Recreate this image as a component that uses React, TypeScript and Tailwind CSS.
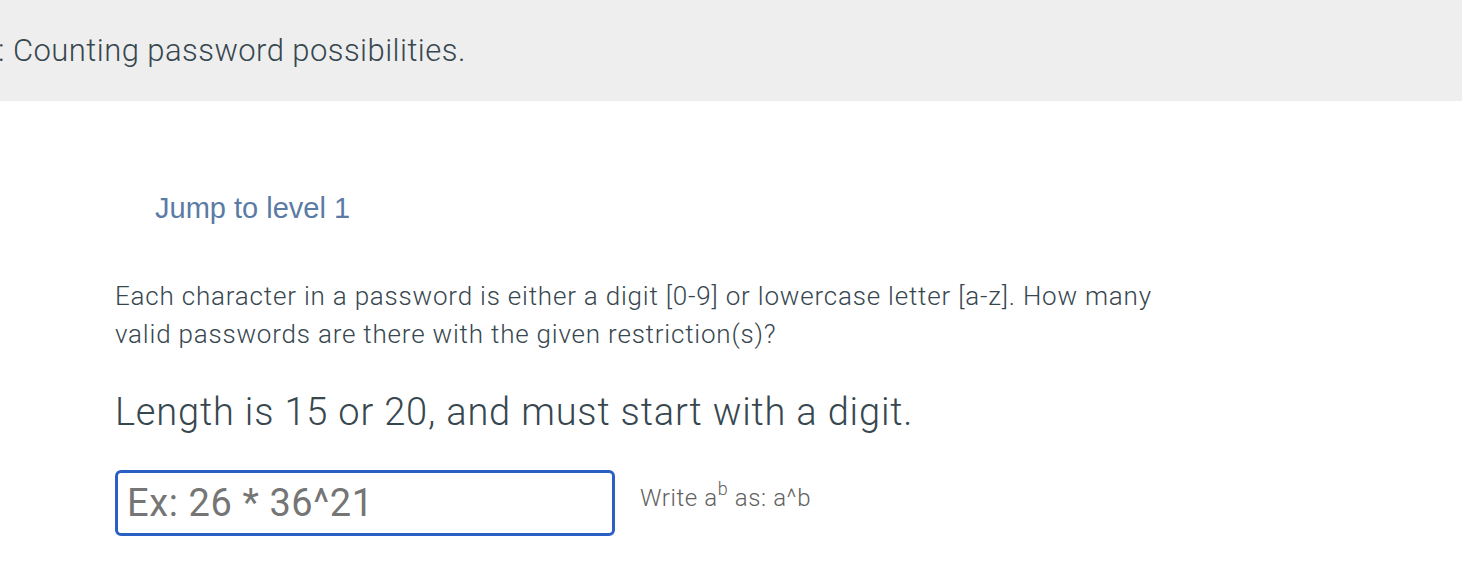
import React from "react";

export default function App() {
  return (
    <div className="w-[1462px] h-[570px] bg-white overflow-hidden" style={{ fontFamily: "Roboto, sans-serif" }}>
      <div className="h-[101px] bg-[#eeeeee] flex items-center overflow-hidden">
        <h1 className="-ml-[2px] mt-[-1px] text-[31px] tracking-[0.45px] font-light text-[#37474f] whitespace-nowrap leading-none">
          : Counting password possibilities.
        </h1>
      </div>
      <div className="pl-[115px] pt-[92px]">
        <div className="pl-[40px] text-[29px] text-[#5b7ba5] leading-[30px]" style={{ fontFamily: "'Liberation Sans', Arial, sans-serif" }}>
          Jump to level 1
        </div>
        <p className="mt-[54px] w-[1060px] text-[26px] tracking-[0.8px] font-light leading-[38px] text-[#37474f]">
          Each character in a password is either a digit [0-9] or lowercase letter [a-z]. How many valid passwords are there with the given restriction(s)?
        </p>
        <p className="mt-[37px] text-[38px] tracking-[0.83px] font-light leading-[44px] text-[#37474f] whitespace-nowrap">
          Length is 15 or 20, and must start with a digit.
        </p>
        <div className="mt-[36px] flex items-start">
          <input
            className="w-[500px] h-[66px] border-[3px] border-[#2a5fc4] rounded-[6px] px-[9px] text-[38px] tracking-[0.6px] text-[#37474f] placeholder:text-[#757575] outline-none"
            placeholder="Ex: 26 * 36^21"
          />
          <span className="ml-[25px] mt-[10px] text-[24px] tracking-[0.6px] font-light text-[#616161] whitespace-nowrap">
            Write a<sup className="text-[18px] top-[-0.6em]">b</sup> as: a^b
          </span>
        </div>
      </div>
    </div>
  );
}
